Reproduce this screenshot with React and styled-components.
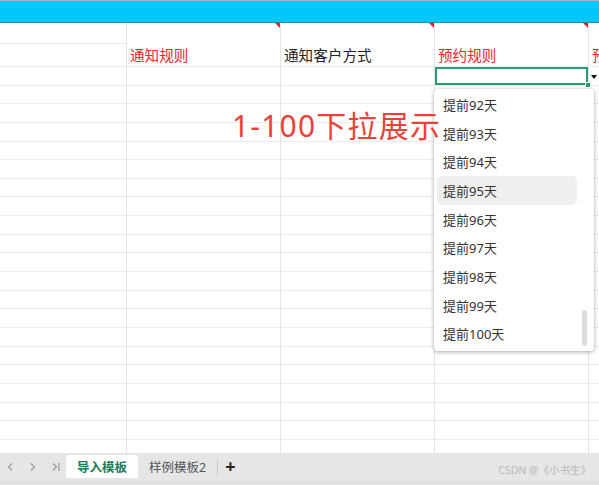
import React from "react";
import styled, { createGlobalStyle } from "styled-components";

const GlobalStyle = createGlobalStyle`
  html, body { margin: 0; padding: 0; background: #fff; }
  body { font-family: "Noto Sans", "Noto Sans CJK SC", sans-serif; }
`;

const ROW_H = 18.65;

const Page = styled.div`
  position: relative;
  width: 599px;
  height: 485px;
  overflow: hidden;
  display: flex;
  flex-direction: column;
`;

const TopBar = styled.div`
  height: 21px;
  flex: none;
  background: #00c8fb;
  border-top: 1px solid #9fb8c2;
  border-bottom: 1px solid #2a8aa6;
`;

const Sheet = styled.div`
  flex: 1;
  overflow: hidden;
  display: grid;
  grid-template-columns: 127px 154px 154px 154px 1fr;
  grid-template-rows: 21px 23px repeat(21, ${ROW_H}px);
`;

const Cell = styled.div`
  position: relative;
  box-sizing: border-box;
  border-right: 1px solid #e4e4e4;
  border-bottom: 1px solid #ececec;
  grid-row: ${(p) => (p.$rowSpan ? `span ${p.$rowSpan}` : "auto")};
  display: flex;
  align-items: flex-end;
  padding: 0 3px 3px;
  font-size: 14.6px;
  line-height: 1;
  color: ${(p) => (p.$red ? "#f0242a" : "#222")};
  white-space: nowrap;
  ${(p) => p.$selected && `box-shadow: inset 0 0 0 2px #2a9b6c;`}
`;

const Comment = styled.span`
  position: absolute;
  top: 0;
  right: 0;
  width: 0;
  height: 0;
  border-top: 5px solid #e3202c;
  border-left: 5px solid transparent;
`;

const Handle = styled.span`
  position: absolute;
  right: -3px;
  bottom: -3px;
  width: 4px;
  height: 4px;
  background: #2a9b6c;
  border: 1px solid #fff;
  z-index: 2;
`;

const Caret = styled.span`
  position: absolute;
  left: calc(100% + 3px);
  top: 8px;
  width: 0;
  height: 0;
  border-top: 4px solid #111;
  border-left: 3.5px solid transparent;
  border-right: 3.5px solid transparent;
`;

const Dropdown = styled.div`
  position: absolute;
  left: 434px;
  top: 89px;
  width: 160px;
  height: 262px;
  box-sizing: border-box;
  background: #fff;
  border-radius: 4px;
  box-shadow: 0 1px 4px rgba(0, 0, 0, 0.35);
  padding: 1px 3px;
  z-index: 5;
`;

const Option = styled.div`
  height: 28.7px;
  width: 140px;
  box-sizing: border-box;
  display: flex;
  align-items: center;
  padding-left: 6px;
  font-size: 13px;
  color: #333;
  border-radius: 5px;
  background: ${(p) => (p.$hover ? "#efefef" : "transparent")};
`;

const ScrollThumb = styled.div`
  position: absolute;
  right: 7px;
  top: 221px;
  width: 5px;
  height: 36px;
  border-radius: 3px;
  background: #dcdcdc;
`;

const Note = styled.div`
  position: absolute;
  left: 232px;
  top: 102px;
  font-size: 30px;
  letter-spacing: 1.2px;
  color: #e8423a;
  white-space: nowrap;
  z-index: 6;
`;

const TabBar = styled.div`
  height: 32px;
  flex: none;
  background: #e6e6e6;
  display: flex;
  align-items: flex-start;
  padding-top: 2px;
  box-sizing: border-box;
  border-bottom: 4px solid #e0e0e0;
  position: relative;
`;

const NavBtn = styled.span`
  width: 22px;
  height: 23px;
  display: flex;
  align-items: center;
  justify-content: center;
`;

const Tab = styled.div`
  height: 23px;
  padding: 0 11px;
  display: flex;
  align-items: center;
  font-size: 12.5px;
  border-radius: 4px 4px 0 0;
  background: ${(p) => (p.$active ? "#fff" : "transparent")};
  color: ${(p) => (p.$active ? "#1f7a55" : "#555")};
  font-weight: ${(p) => (p.$active ? 700 : 400)};
`;

const Divider = styled.span`
  width: 1px;
  height: 16px;
  margin-top: 4px;
  background: #c8c8c8;
`;

const AddBtn = styled.span`
  font-size: 18px;
  font-weight: 700;
  line-height: 22px;
  color: #222;
  padding: 0 7px;
`;

const Watermark = styled.span`
  position: absolute;
  right: 8px;
  bottom: 4px;
  font-size: 10.5px;
  color: #b9b9b9;
`;

const Chevron = ({ dir, bar }) => (
  <svg width="10" height="10" viewBox="0 0 10 10" fill="none" stroke="#9c9c9c" strokeWidth="1.3">
    {dir === "left" ? <polyline points="6,1.5 2.5,5 6,8.5" /> : <polyline points="3,1.5 6.5,5 3,8.5" />}
    {bar && <line x1="9" y1="1" x2="9" y2="9" />}
  </svg>
);

const options = [92, 93, 94, 95, 96, 97, 98, 99, 100];

export default function App() {
  const rows = [];
  for (let r = 0; r < 21; r++) {
    for (let c = 0; c < 5; c++) {
      const selected = r === 0 && c === 3;
      rows.push(
        <Cell key={`${r}-${c}`} $selected={selected}>
          {selected && (
            <>
              <Handle />
              <Caret />
            </>
          )}
        </Cell>
      );
    }
  }

  return (
    <Page>
      <GlobalStyle />
      <TopBar />
      <Sheet>
        <Cell />
        <Cell $rowSpan={2} $red>
          通知规则
          <Comment />
        </Cell>
        <Cell $rowSpan={2}>
          通知客户方式
          <Comment />
        </Cell>
        <Cell $rowSpan={2} $red>
          预约规则
          <Comment />
        </Cell>
        <Cell $rowSpan={2} $red>
          预约时间
        </Cell>
        <Cell />
        {rows}
      </Sheet>
      <TabBar>
        <NavBtn>
          <Chevron dir="left" />
        </NavBtn>
        <NavBtn>
          <Chevron dir="right" />
        </NavBtn>
        <NavBtn>
          <Chevron dir="right" bar />
        </NavBtn>
        <Tab $active>导入模板</Tab>
        <Tab>样例模板2</Tab>
        <Divider />
        <AddBtn>+</AddBtn>
        <Watermark>CSDN @《小书生》</Watermark>
      </TabBar>
      <Note>1-100下拉展示</Note>
      <Dropdown>
        {options.map((n) => (
          <Option key={n} $hover={n === 95}>
            提前{n}天
          </Option>
        ))}
        <ScrollThumb />
      </Dropdown>
    </Page>
  );
}
